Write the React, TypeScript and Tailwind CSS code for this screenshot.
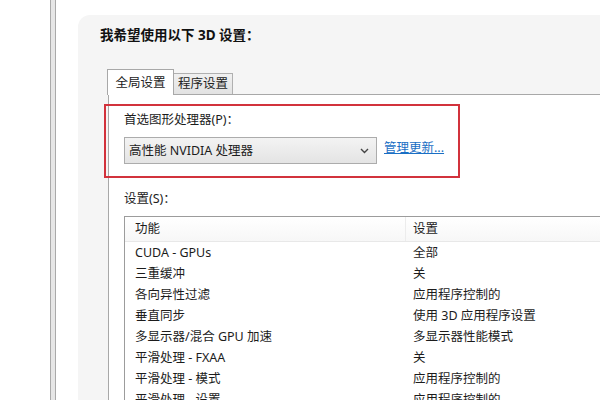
import React from 'react';

const FONT = { fontFamily: '"Noto Sans", "Noto Sans CJK SC", sans-serif' };

const rows: [string, string][] = [
  ['CUDA - GPUs', '全部'],
  ['三重缓冲', '关'],
  ['各向异性过滤', '应用程序控制的'],
  ['垂直同步', '使用 3D 应用程序设置'],
  ['多显示器/混合 GPU 加速', '多显示器性能模式'],
  ['平滑处理 - FXAA', '关'],
  ['平滑处理 - 模式', '应用程序控制的'],
  ['平滑处理 - 设置', '应用程序控制的'],
];

export default function App() {
  return (
    <div className="w-[600px] h-[400px] bg-white overflow-hidden flex text-[#1c1c1c] text-[12.5px] leading-[16px]" style={FONT}>
      <div className="w-[50px] shrink-0" />
      <div className="w-[6px] shrink-0 border-x border-[#a9a9a9] bg-[#e6e6e6]" />
      <div className="w-[22px] shrink-0" />

      {/* dialog panel */}
      <div className="flex-1 mt-[15px] bg-[#f5f5f5] rounded-tl-[12px] pl-[22px] pt-[11px] flex flex-col relative">
        <div className="font-bold text-[13.5px] leading-[18px] text-[#111]">我希望使用以下 3D 设置：</div>

        {/* tabs */}
        <div className="flex items-end mt-[25px] ml-[7px] relative z-10">
          <div className="w-[67px] h-[26px] bg-white border border-b-0 border-[#a8a8a8] flex items-center justify-center text-[#222] -mb-px">
            全局设置
          </div>
          <div className="w-[59px] h-[21px] bg-gradient-to-b from-[#f0f0f0] to-[#e2e2e2] border border-l-0 border-b-0 border-[#b0b0b0] flex items-center justify-center text-[#222]">
            程序设置
          </div>
        </div>

        {/* tab page */}
        <div className="flex-1 ml-[8px] bg-white border-t border-l border-[#a8a8a8] pl-[15px] pt-[17px] flex flex-col">
          <div>首选图形处理器(P)：</div>
          <div className="flex items-center mt-[9px]">
            <div className="w-[253px] h-[27px] border border-[#acacac] bg-gradient-to-b from-[#f3f3f3] to-[#e4e4e4] flex items-center pl-[4px] pr-[6px] justify-between">
              <span>高性能 NVIDIA 处理器</span>
              <svg width="9" height="6" viewBox="0 0 9 6" className="mr-[1px]">
                <path d="M1 1 L4.5 4.5 L8 1" fill="none" stroke="#444" strokeWidth="1.4" />
              </svg>
            </div>
            <span className="ml-[7px] text-[#1a6fc4] underline -mt-[6px]">管理更新...</span>
          </div>

          <div className="mt-[27px]">设置(S)：</div>

          <div className="mt-[9px] flex-1 border-t border-l border-[#9c9c9c] flex flex-col">
            <div className="h-[25px] flex items-center bg-gradient-to-b from-white to-[#f7f7f7] border-b border-[#e8e8e8]">
              <div className="w-[281px] pl-[10px] h-full flex items-center border-r border-[#ececec]">功能</div>
              <div className="pl-[7px]">设置</div>
            </div>
            {rows.map(([k, v]) => (
              <div key={k} className="h-[21px] flex items-center">
                <div className="w-[282px] pl-[10px]">{k}</div>
                <div className="pl-[6px]">{v}</div>
              </div>
            ))}
          </div>
        </div>
      </div>

      {/* red annotation frame */}
      <div className="absolute left-[104px] top-[104px] w-[356px] h-[74px] border-2 border-[#d2323c] pointer-events-none" />
    </div>
  );
}
